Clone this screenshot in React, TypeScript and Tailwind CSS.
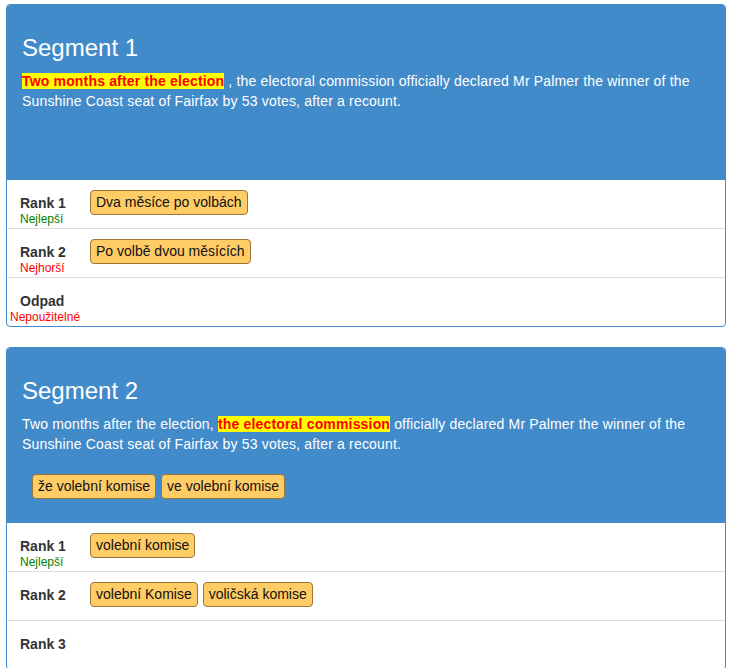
type Row = {
  label: string;
  sub?: string;
  subClass?: string;
  chips: string[];
};

type Segment = {
  title: string;
  before: string;
  highlight: string;
  after: string;
  pool: string[];
  rows: Row[];
};

const segments: Segment[] = [
  {
    title: "Segment 1",
    before: "",
    highlight: "Two months after the election",
    after:
      " , the electoral commission officially declared Mr Palmer the winner of the Sunshine Coast seat of Fairfax by 53 votes, after a recount.",
    pool: [],
    rows: [
      { label: "Rank 1", sub: "Nejlepší", subClass: "text-[#008000]", chips: ["Dva měsíce po volbách"] },
      { label: "Rank 2", sub: "Nejhorší", subClass: "text-[#ff0000]", chips: ["Po volbě dvou měsících"] },
      { label: "Odpad", sub: "Nepoužitelné", subClass: "text-[#ff0000] -ml-[10px]", chips: [] },
    ],
  },
  {
    title: "Segment 2",
    before: "Two months after the election, ",
    highlight: "the electoral commission",
    after:
      " officially declared Mr Palmer the winner of the Sunshine Coast seat of Fairfax by 53 votes, after a recount.",
    pool: ["že volební komise", "ve volební komise"],
    rows: [
      { label: "Rank 1", sub: "Nejlepší", subClass: "text-[#008000]", chips: ["volební komise"] },
      { label: "Rank 2", chips: ["volební Komise", "voličská komise"] },
      { label: "Rank 3", chips: [] },
    ],
  },
];

function Chip({ text }: { text: string }) {
  return (
    <span className="inline-block h-[25px] rounded-[4px] border border-[#9c7536] bg-[#ffcc66] px-[5px] py-[2px] text-[14px] leading-[19px] whitespace-nowrap text-[#111]">
      {text}
    </span>
  );
}

function SegmentPanel({ seg }: { seg: Segment }) {
  return (
    <div className="mb-[20px] overflow-hidden rounded-[4px] border border-[#428bca] bg-white">
      <div className="bg-[#428bca] px-[15px] pt-[10px] pb-[10px] text-white">
        <h3 className="mt-[20px] mb-[10px] text-[24px] leading-[26px] font-normal">{seg.title}</h3>
        <p className="mb-[10px] text-[14px] leading-[20px] tracking-[0.17px]">
          {seg.before}
          <span className="bg-[#ffff00] font-bold text-[#ff0000]">{seg.highlight}</span>
          {seg.after}
        </p>
        <div className="flex h-[49px] items-start gap-[5px] px-[10px] pt-[10px]">
          {seg.pool.map((c) => (
            <Chip key={c} text={c} />
          ))}
        </div>
      </div>
      <div>
        {seg.rows.map((r, i) => (
          <div
            key={r.label}
            className={`flex items-start pt-[10px] ${i > 0 ? "h-[49px] border-t border-[#dddddd]" : "h-[48px]"}`}
          >
            <div className="w-[83px] shrink-0 pt-[3px] pl-[13px]">
              <div className="text-[14px] leading-[20px] font-bold text-[#333]">{r.label}</div>
              {r.sub && (
                <div className={`text-[12px] leading-[12px] whitespace-nowrap ${r.subClass}`}>{r.sub}</div>
              )}
            </div>
            <div className="flex gap-[5px]">
              {r.chips.map((c) => (
                <Chip key={c} text={c} />
              ))}
            </div>
          </div>
        ))}
      </div>
    </div>
  );
}

export default function App() {
  return (
    <div className="min-h-screen bg-white pt-[4px] font-['Liberation_Sans',Arial,sans-serif]">
      <div className="ml-[6px] w-[720px]">
        {segments.map((s) => (
          <SegmentPanel key={s.title} seg={s} />
        ))}
      </div>
    </div>
  );
}
